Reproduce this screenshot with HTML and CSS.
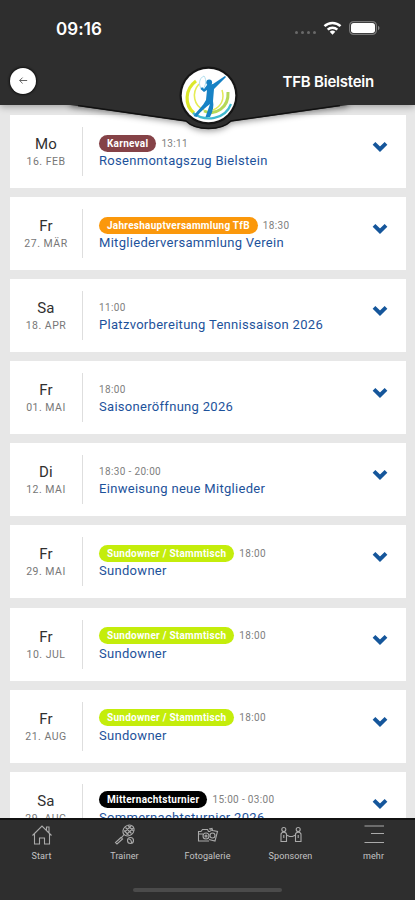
FILE: index.html
```html
<!DOCTYPE html>
<html lang="de">
<head>
<meta charset="utf-8">
<meta name="viewport" content="width=device-width, initial-scale=1">
<title>TFB Bielstein</title>
<link rel="stylesheet" href="styles.css">
</head>
<body>
<svg class="defs" aria-hidden="true">
  <symbol id="chevron" viewBox="0 0 16 12"><path d="M2 2.4 8 8.2 14 2.4" fill="none" stroke="currentColor" stroke-width="3.9"/></symbol>
</svg>
<header class="header">
  <div class="status">
    <span class="clock">09:16</span>
    <span class="signals">
      <span class="dots"><i></i><i></i><i></i><i></i></span>
      <svg class="wifi" viewBox="0 0 18 14"><g fill="none" stroke="#fff" stroke-width="2.5"><path d="M1 5.2a11.5 11.5 0 0 1 16 0"/><path d="M4.2 8.6a7 7 0 0 1 9.6 0"/></g><path d="M6.2 10.8a4 4 0 0 1 5.6 0L9 13.8z" fill="#fff"/></svg>
      <svg class="battery" viewBox="0 0 31 14"><rect x=".6" y=".6" width="26.8" height="12.8" rx="4" fill="none" stroke="#777" stroke-width="1.2"/><rect x="2" y="2" width="24" height="10" rx="2.7" fill="#fff"/><path d="M29 4.8c2 .8 2 3.600 0 4.400z" fill="#888"/></svg>
    </span>
  </div>
  <div class="bar">
    <button class="back" aria-label="Zurück"><svg viewBox="0 0 12 10"><path d="M11 5H2M5.500 1.500 2 5l3.500 3.500" fill="none" stroke="#555" stroke-width="1.100"/></svg></button>
    <h1 class="club">TFB Bielstein</h1>
  </div>
  <svg class="crest" viewBox="0 0 415 80">
    <clipPath id="below"><rect x="0" y="45" width="415" height="35"/></clipPath>
    <g clip-path="url(#below)">
      <path class="flap" d="M70 36H348V45L231 61.500C226 66 219 69 208.500 69S191 66 186 61.500L70 45Z" fill="#2e2e2e"/>
      <path d="M78 45.500 186 61C191 66 199 68.500 208.500 68.500S226 66 231 61L340 45.500" fill="none" stroke="#111" stroke-width="1.500"/>
    </g>
    <circle cx="208.500" cy="35.500" r="29" fill="#151515"/>
    <circle cx="208.500" cy="35.500" r="26.800" fill="#fff"/>
    <g fill="none">
      <path d="M196 21C185 29 184 45 194 53" stroke="#dce829" stroke-width="3.200"/>
      <path d="M199 24C191 33 194 46 204 50" stroke="#e5ec54" stroke-width="1.600"/>
      <path d="M193 53C205 62 225 60 231 44" stroke="#3fb9cf" stroke-width="2.200"/>
      <path d="M204 51C215 56 229 48 228 32" stroke="#b5d857" stroke-width="3"/>
      <path d="M213 50C221 47 225 39 222 30" stroke="#e4e956" stroke-width="1.500"/>
      <path d="M202 30C198 25 199 18 204 16C207 20 206 26 202 30" stroke="#9ed5e8" stroke-width=".8"/>
    </g>
    <circle cx="209.200" cy="22.500" r="2.900" fill="#1680c2"/>
    <path d="M207 25 204 29 202 27 200.500 29 204 32 207 30 206 40C203 46 198 50 193.500 56L196.500 57C201 51 206 47 210 44L205.500 57 210 57C213 51 214 46 213 41L214 29 226 17 225 16 213 24Z" fill="#1782c5"/>
  </svg>
</header>
<main class="list">
  <article class="card"><div class="date"><b>Mo</b><span>16. FEB</span></div><div class="info"><p class="meta"><span class="tag wine">Karneval</span><time>13:11</time></p><h2>Rosenmontagszug Bielstein</h2></div><svg class="chev"><use href="#chevron"/></svg></article>
  <article class="card"><div class="date"><b>Fr</b><span>27. MÄR</span></div><div class="info"><p class="meta"><span class="tag orange">Jahreshauptversammlung TfB</span><time>18:30</time></p><h2>Mitgliederversammlung Verein</h2></div><svg class="chev"><use href="#chevron"/></svg></article>
  <article class="card"><div class="date"><b>Sa</b><span>18. APR</span></div><div class="info"><p class="meta"><time>11:00</time></p><h2>Platzvorbereitung Tennissaison 2026</h2></div><svg class="chev"><use href="#chevron"/></svg></article>
  <article class="card"><div class="date"><b>Fr</b><span>01. MAI</span></div><div class="info"><p class="meta"><time>18:00</time></p><h2>Saisoneröffnung 2026</h2></div><svg class="chev"><use href="#chevron"/></svg></article>
  <article class="card"><div class="date"><b>Di</b><span>12. MAI</span></div><div class="info"><p class="meta"><time>18:30 - 20:00</time></p><h2>Einweisung neue Mitglieder</h2></div><svg class="chev"><use href="#chevron"/></svg></article>
  <article class="card"><div class="date"><b>Fr</b><span>29. MAI</span></div><div class="info"><p class="meta"><span class="tag lime">Sundowner / Stammtisch</span><time>18:00</time></p><h2>Sundowner</h2></div><svg class="chev"><use href="#chevron"/></svg></article>
  <article class="card"><div class="date"><b>Fr</b><span>10. JUL</span></div><div class="info"><p class="meta"><span class="tag lime">Sundowner / Stammtisch</span><time>18:00</time></p><h2>Sundowner</h2></div><svg class="chev"><use href="#chevron"/></svg></article>
  <article class="card"><div class="date"><b>Fr</b><span>21. AUG</span></div><div class="info"><p class="meta"><span class="tag lime">Sundowner / Stammtisch</span><time>18:00</time></p><h2>Sundowner</h2></div><svg class="chev"><use href="#chevron"/></svg></article>
  <article class="card"><div class="date"><b>Sa</b><span>29. AUG</span></div><div class="info"><p class="meta"><span class="tag black">Mitternachtsturnier</span><time>15:00 - 03:00</time></p><h2>Sommernachtsturnier 2026</h2></div><svg class="chev"><use href="#chevron"/></svg></article>
</main>
<footer class="footer">
  <nav class="tabs">
    <a class="tab"><svg viewBox="0 0 22 22"><path d="M1.500 11.500 11 2l9.500 9.500M3.500 10v10H8.500v-6h5v6h5V10M15.500 6V3H18v5.500"/></svg>Start</a>
    <a class="tab"><svg viewBox="0 0 22 22"><ellipse cx="14.500" cy="6.500" rx="6" ry="5" transform="rotate(-40 14.500 6.500)"/><path d="M10 10.500 7 14.500M7.500 13 1.500 18.500 3 20 9 14.500M11.500 3.500l6 6M14 1.500l5.500 5.500M10 6.500l4.500 4.500M10.500 8l7-6.500M12.500 10.500l7-6.500"/><circle cx="16.500" cy="16.500" r="3"/><path d="M14.500 15c2 0 3 1.500 3 4"/></svg>Trainer</a>
    <a class="tab"><svg viewBox="0 0 22 22"><path d="M12 17H1.500V7.500H4L5.500 5.500h5l1 2h2M13 6l7.500 1.500-2.500 9.500-6-1.500M2 10h4M12 5l3-.5.5 2"/><circle cx="9" cy="12" r="3"/><circle cx="9" cy="12" r="1"/><circle cx="15.500" cy="11.500" r="2.500"/></svg>Fotogalerie</a>
    <a class="tab"><svg viewBox="0 0 22 22"><circle cx="3.800" cy="5.500" r="2"/><circle cx="18.200" cy="5.500" r="2"/><path d="M1 10.500c0-3 5.500-3 5.500 0v7H1zM3.800 14V11M21 10.500c0-3-5.500-3-5.500 0v7H21zM18.200 14V11M6.500 11l3 1.500h3l3-1.500"/></svg>Sponsoren</a>
    <a class="tab"><svg viewBox="0 0 22 22"><path d="M1.500 2H21M8 9.500H21M1.500 18.500H21"/></svg>mehr</a>
  </nav>
  <div class="home-indicator"></div>
</footer>
</body>
</html>
```
FILE: styles.css
```css
* { box-sizing: border-box; margin: 0; padding: 0; }
body { width: 415px; height: 900px; display: flex; flex-direction: column; overflow: hidden; background: #e7e7e7; font-family: Roboto, sans-serif; }
.defs { display: none; }
.header { position: relative; z-index: 2; flex: 0 0 105px; background: #2e2e2e; color: #fff; box-shadow: 0 2px 7px rgba(0,0,0,.3); }
.status { height: 58px; padding: 2px 35px 0 56px; display: flex; align-items: center; justify-content: space-between; }
.clock { font: 600 17px/50px Inter, sans-serif; letter-spacing: .05px; margin-top: -2px; }
.signals { display: flex; align-items: center; margin-top: -5px; }
.dots { display: flex; gap: 3px; margin: 9px 7px 0 0; }
.dots i { width: 3px; height: 3px; border-radius: 50%; background: #696969; }
.wifi { width: 19px; height: 14px; margin-right: 7px; }
.battery { width: 31px; height: 14px; }
.bar { height: 47px; padding: 0 41px 0 10px; display: flex; justify-content: space-between; align-items: center; }
.back { width: 26px; height: 26px; margin-top: -2px; border: 0; border-radius: 50%; background: #fff; display: flex; align-items: center; justify-content: center; box-shadow: 0 0 2px 1px #111; }
.back svg { width: 10px; height: 9px; }
.club { font: 600 15px/20px Inter, sans-serif; letter-spacing: -.22px; }
.crest { position: absolute; left: 0; top: 60px; width: 415px; height: 80px; pointer-events: none; }
.flap { filter: drop-shadow(0 2px 3px rgba(0,0,0,.4)); }
.list { flex: 1; min-height: 0; overflow: hidden; padding: 10px 9.500px 0 10px; display: flex; flex-direction: column; gap: 9.100px; }
.card { flex: 0 0 73px; display: flex; align-items: center; background: #fff; padding-right: 18px; }
.date { width: 73px; height: 49px; border-right: 1.500px solid #dedede; display: flex; flex-direction: column; align-items: center; padding-top: 8px; }
.date b { font-weight: 400; font-size: 15px; line-height: 19px; color: #303030; letter-spacing: .2px; }
.date span { font-size: 10.500px; line-height: 15px; color: #777; letter-spacing: .5px; }
.info { flex: 1; padding: 1px 0 0 16px; }
.meta { height: 18px; display: flex; align-items: center; }
.tag { height: 17px; line-height: 17px; border-radius: 9px; padding: 0 8px; margin-right: 5px; color: #fff; font-size: 10px; font-weight: 700; letter-spacing: .26px; white-space: nowrap; }
.wine { background: #854247; }
.orange { background: #fb980b; }
.lime { background: #c4ed0b; }
.black { background: #000; }
.meta time { font-size: 10px; color: #808080; letter-spacing: .35px; }
.info h2 { font-size: 13px; line-height: 18px; font-weight: 400; color: #1d529b; letter-spacing: .3px; white-space: nowrap; }
.chev { width: 16px; height: 12px; margin-top: -9px; color: #15569b; }
.footer { position: relative; z-index: 3; flex: 0 0 82px; background: #2e2e2e; border-top: 2px solid #111; display: flex; flex-direction: column; }
.tabs { display: grid; grid-template-columns: repeat(5, 1fr); height: 68px; padding-top: 4px; }
.tab { display: flex; flex-direction: column; align-items: center; font-size: 9px; line-height: 12px; color: #c4c4c4; letter-spacing: .1px; gap: 4px; }
.tab svg { width: 22px; height: 22px; fill: none; stroke: #aaa; stroke-width: 1.100; }
.home-indicator { width: 149px; height: 4px; border-radius: 2px; background: #4b4b4b; margin: 0 auto; }
```
